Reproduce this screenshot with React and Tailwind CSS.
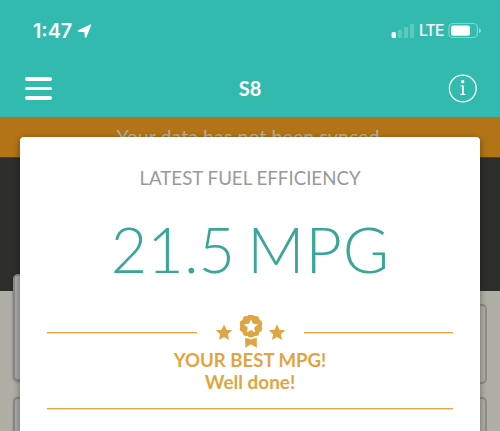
import React from 'react'

const STAR = 'M0 -8.3 L2.4 -2.8 L8.2 -2.3 L3.8 1.7 L5.1 7.5 L0 4.5 L-5.1 7.5 L-3.8 1.7 L-8.2 -2.3 L-2.4 -2.8 Z'

const StatusBar = () => (
  <div className="flex h-[62px] justify-between pt-[17px] pr-[18px] pl-[33px] text-white">
    <div className="flex h-7 items-center gap-[4px]">
      <span className="w-10 whitespace-nowrap font-['Inter',sans-serif] text-[19.8px] leading-7 font-semibold">1:47</span>
      <svg className="h-[15px] w-[15px]" viewBox="0 0 15 15" fill="currentColor" stroke="currentColor" strokeWidth="1.4" strokeLinejoin="round">
        <path d="M13.5 1.2 L8.6 13.2 L8 7.5 L1.6 7 Z" />
      </svg>
    </div>
    <div className="flex h-7 items-center">
      <svg className="h-7 w-[24px]" viewBox="0 0 24 28" fill="currentColor">
        <rect x="1.6" y="15.3" width="4.4" height="5.7" rx="1" />
        <rect x="7.8" y="13" width="4.2" height="8" rx="1" opacity=".22" />
        <rect x="13.9" y="10" width="4.2" height="11" rx="1" opacity=".22" />
        <rect x="20" y="7" width="3.9" height="14" rx="1" opacity=".22" />
      </svg>
      <span className="ml-[4px] w-[30px] pl-px whitespace-nowrap font-['Inter',sans-serif] text-[15.7px] leading-7 font-medium tracking-[-0.8px]">LTE</span>
      <svg className="h-7 w-[34px]" viewBox="0 0 34 28" fill="none">
        <rect x="0.9" y="6.5" width="28.5" height="14" rx="4" stroke="white" strokeOpacity=".38" strokeWidth="1.2" />
        <rect x="3" y="8.6" width="19" height="10.2" rx="2.2" fill="white" />
        <path d="M31 11 Q33 11.5 33 13.5 Q33 15.5 31 16.2 Z" fill="white" fillOpacity=".45" />
      </svg>
    </div>
  </div>
)

const NavBar = () => (
  <div className="flex h-[55px] items-center justify-between pr-[23px] pb-[2px] pl-[25px] text-white">
    <button className="flex h-[23px] w-[27px] flex-col justify-between">
      <span className="h-[3.6px] w-full rounded-full bg-white"></span>
      <span className="h-[3.6px] w-full rounded-full bg-white"></span>
      <span className="h-[3.6px] w-full rounded-full bg-white"></span>
    </button>
    <h1 className="-mt-[2px] text-[20px] leading-7 font-bold">S8</h1>
    <svg className="size-[29px]" viewBox="0 0 29 29" fill="none">
      <circle cx="14.8" cy="14.5" r="13.4" stroke="white" strokeWidth="1.3" />
      <circle cx="14.7" cy="7.7" r="1.7" fill="white" />
      <path d="M12.5 11.9 H15 M12.4 20.4 H17.4" stroke="white" strokeWidth="1" />
      <path d="M14.9 11.5 V20.6" stroke="white" strokeWidth="1.8" />
    </svg>
  </div>
)

const Badge = () => (
  <svg className="h-[36px] w-[72px]" viewBox="0 0 72 36" fill="#dfa542">
    <path d={STAR} transform="translate(9 17.5)" />
    <path d={STAR} transform="translate(62 17.5)" />
    <circle cx="36" cy="11" r="10.7" />
    <circle cx="36" cy="2.6" r="3.2" />
    <circle cx="40.9" cy="4.2" r="3.2" />
    <circle cx="44" cy="8.4" r="3.2" />
    <circle cx="44" cy="13.6" r="3.2" />
    <circle cx="40.9" cy="17.8" r="3.2" />
    <circle cx="36" cy="19.4" r="3.2" />
    <circle cx="31.1" cy="17.8" r="3.2" />
    <circle cx="28" cy="13.6" r="3.2" />
    <circle cx="28" cy="8.4" r="3.2" />
    <circle cx="31.1" cy="4.2" r="3.2" />
    <path d={STAR} transform="translate(36 11.2) scale(.84)" fill="white" />
    <path d="M30.2 23 Q33.5 23.4 36 24.6 Q38.5 23.4 41.8 23 V32.7 L36 29.2 L30.2 32.7 Z" />
  </svg>
)

const Modal = () => (
  <div className="absolute top-[137px] left-[20px] h-[320px] w-[460px] rounded-t-[4px] bg-white px-[27px] text-center shadow-[0_2px_7px_rgba(0,0,0,0.4)]">
    <h2 className="pt-[27px] text-[18.7px] leading-7 whitespace-nowrap text-[#999]">LATEST FUEL EFFICIENCY</h2>
    <p className="mt-[15px] text-[63px] leading-[84px] font-light whitespace-nowrap text-[#39a699] [word-spacing:-5px]">
      21.5 <span className="-mr-[1px] tracking-[1px]">MPG</span>
    </p>
    <div className="mt-[24px] flex h-[36px] items-center justify-between">
      <div className="h-[2px] w-[150px] border-b border-[#f5dfb8] bg-[#e2a744]"></div>
      <Badge />
      <div className="h-[2px] w-[149px] border-b border-[#f5dfb8] bg-[#e2a744]"></div>
    </div>
    <div className="-mt-[2px] flex h-[59px] flex-col text-[18.6px] leading-[22px] font-bold text-[#dfa542]">
      <span>YOUR BEST MPG!</span>
      <span className="text-[18.9px]">Well done!</span>
    </div>
    <div className="h-[2px] border-b border-[#f5dfb8] bg-[#e2a744]"></div>
  </div>
)

const App = () => {
  return (
    <div className="relative h-[431px] w-[500px] overflow-hidden bg-[#afafa6] font-['Lato',sans-serif]">
      <header className="h-[117px] bg-[#33baae]">
        <StatusBar />
        <NavBar />
      </header>
      <div className="h-10 bg-[#b37415] pt-[6px] pr-1 text-center text-[19.7px] leading-7 text-[#b5b0a8]">Your data has not been synced</div>
      <div className="h-[134px] border-t border-[#454239] bg-[#2d2d2b]"></div>
      <div className="flex h-[140px] justify-between px-[13px]">
        <div className="-mt-[17px] flex w-[200px] flex-col gap-[16px]">
          <div className="h-[107px] shrink-0 rounded-[5px] border-2 border-[#898989] bg-[#aaa] shadow-[0_1px_3px_rgba(0,0,0,0.3)]"></div>
          <div className="h-[80px] shrink-0 rounded-[5px] border-2 border-[#898989] bg-[#aaa] shadow-[0_0_2px_rgba(0,0,0,0.25)]"></div>
        </div>
        <div className="mt-[13px] flex w-[200px] flex-col gap-[13px]">
          <div className="h-[80px] shrink-0 rounded-[5px] border-2 border-[#8e8e8c]"></div>
          <div className="h-[80px] shrink-0 rounded-[5px] border-2 border-[#8e8e8c]"></div>
        </div>
      </div>
      <Modal />
    </div>
  )
}

export default App
